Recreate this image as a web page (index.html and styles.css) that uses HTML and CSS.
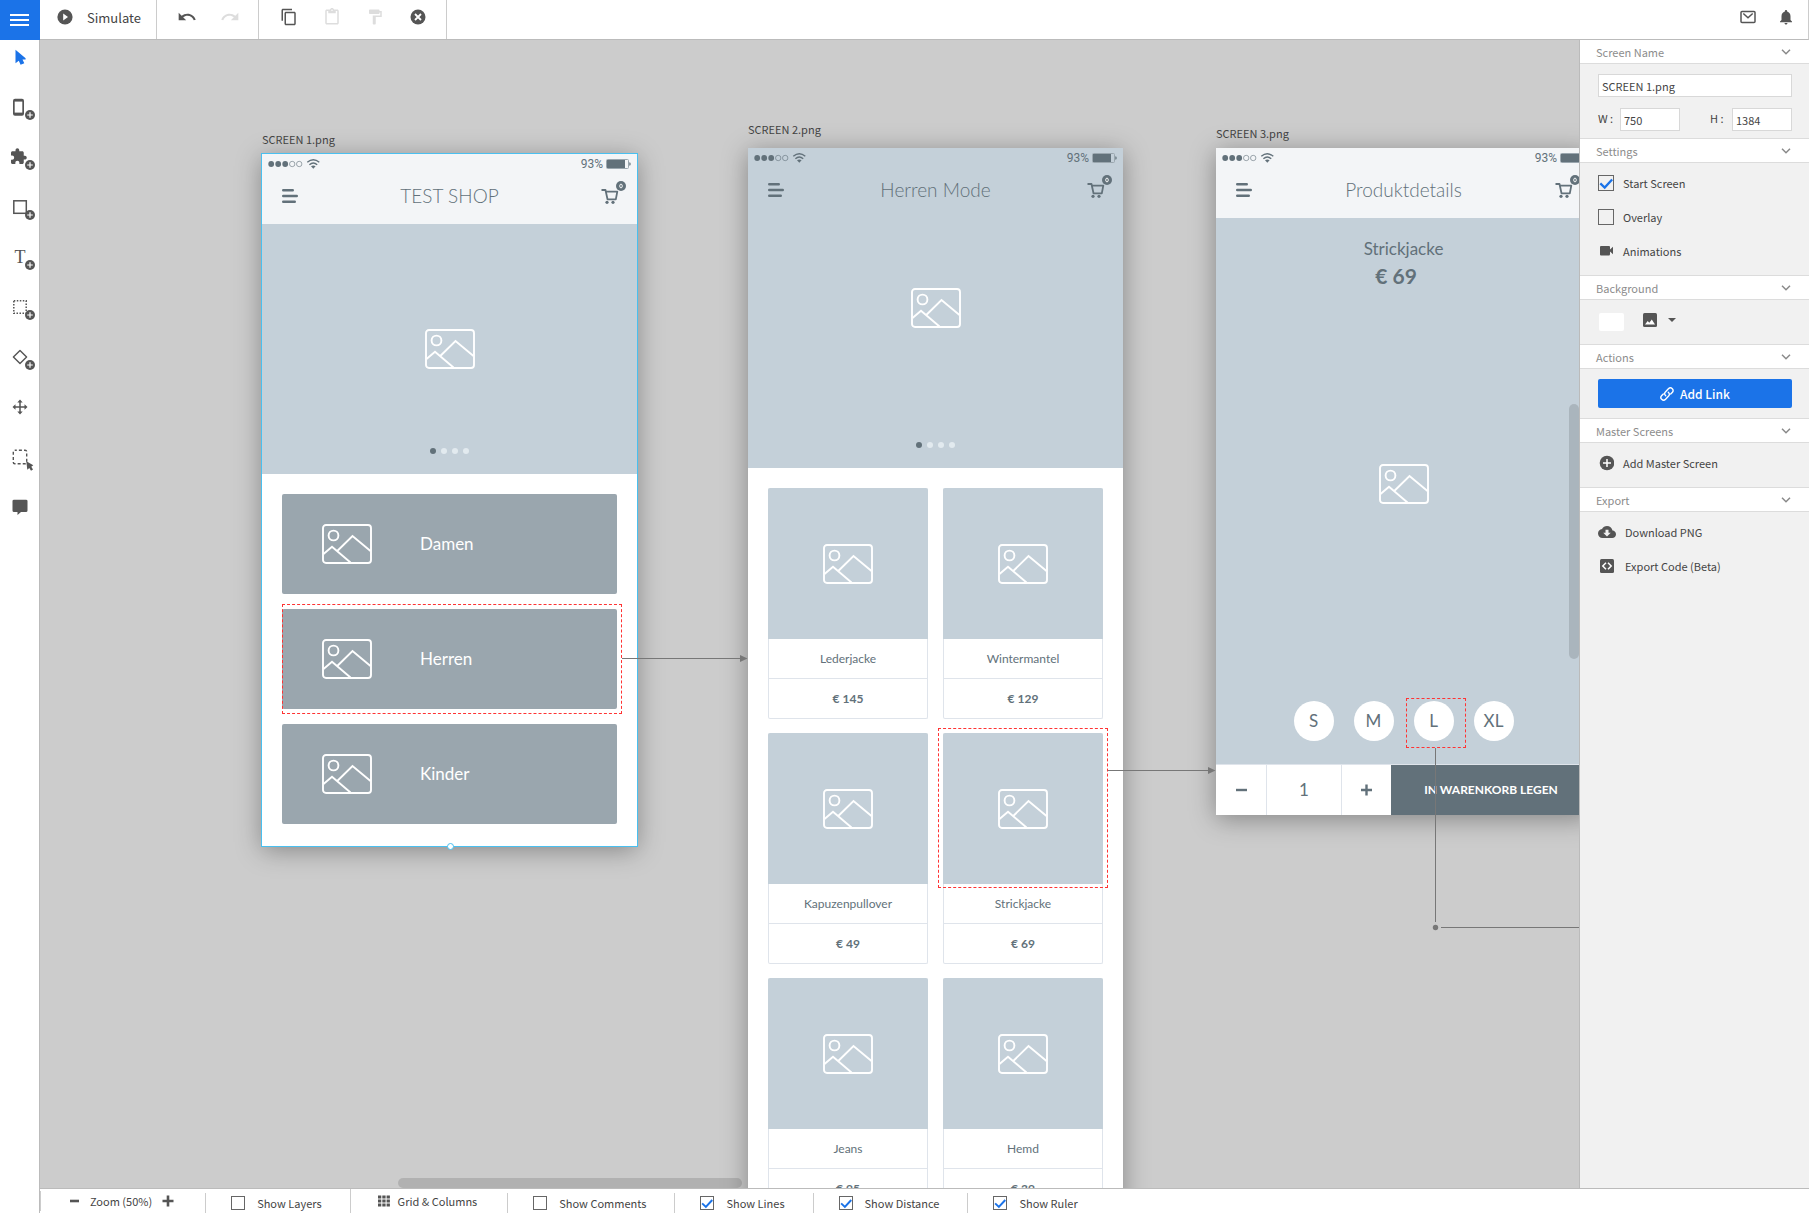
FILE: index.html
```html
<!DOCTYPE html>
<html lang="en">
  <head>
    <meta charset="UTF-8" />
    <meta name="viewport" content="width=device-width, initial-scale=1.0" />
    <title>Prototype editor</title>
    <link rel="stylesheet" href="styles.css">
  </head>
  <body>
    <!-- shared icons -->
    <svg class="sprite" aria-hidden="true">
      <symbol id="picture" viewBox="0 0 50 40">
        <g fill="none" stroke="#fff" stroke-width="1.9">
          <rect x="1" y="1" width="48" height="38" rx="3" />
          <circle cx="11.5" cy="11.5" r="4.9" />
          <path d="M1.5 30 10 22.8 28.5 38.5M15 27.2 30.5 12 48.5 27" />
        </g>
      </symbol>
      <symbol id="lines" viewBox="0 0 16 14">
        <path d="M1.2 1.3H10.8M1.2 7H14.8M1.2 12.7H12.8" stroke="#62717a" stroke-width="2.4" stroke-linecap="round" />
      </symbol>
      <symbol id="cart" viewBox="0 0 25 23">
        <path d="M.5 9H4.5L6.5 18.3H14.8L16.3 10.6H5" fill="none" stroke="#62717a" stroke-width="1.8" stroke-linejoin="round" />
        <circle cx="6" cy="21.3" r="1.6" fill="#62717a" />
        <circle cx="12" cy="21.3" r="1.6" fill="#62717a" />
        <circle cx="20" cy="5" r="5" fill="#62717a" />
        <ellipse cx="20" cy="5" rx="1.3" ry="1.9" fill="none" stroke="#fff" stroke-width=".9" />
      </symbol>
      <symbol id="signal" viewBox="0 0 54 12">
        <g fill="#62717a">
          <circle cx="3.2" cy="6" r="2.9" /><circle cx="10.2" cy="6" r="2.9" /><circle cx="17.2" cy="6" r="2.9" />
        </g>
        <g fill="none" stroke="#62717a" stroke-width=".6">
          <circle cx="24.2" cy="6" r="2.7" /><circle cx="31.2" cy="6" r="2.7" />
        </g>
        <path d="M39.3 4.3Q45.3-1 51.3 4.3M41.4 6.7Q45.3 3.2 49.2 6.7" fill="none" stroke="#62717a" stroke-width="1.4" />
        <path d="M43 8.3Q45.3 6.6 47.6 8.3L45.3 10.7Z" fill="#62717a" />
      </symbol>
      <symbol id="battery" viewBox="0 0 25 10">
        <rect x=".5" y=".5" width="22" height="9" rx="1" fill="none" stroke="#9aa6ae" />
        <rect x="1" y="1" width="18" height="8" fill="#62717a" />
        <path d="M23.3 3.2Q24.7 3.4 24.7 5T23.3 6.8Z" fill="#62717a" />
      </symbol>
      <symbol id="chevron" viewBox="0 0 10 6">
        <path d="M1 .8 5 4.8 9 .8" fill="none" stroke="#8a8a8a" stroke-width="1.5" />
      </symbol>
      <symbol id="plus-badge" viewBox="0 0 10 10">
        <circle cx="5" cy="5" r="5" fill="#555" />
        <path d="M5 2.2V7.8M2.2 5H7.8" stroke="#fff" stroke-width="1.2" />
      </symbol>
    </svg>

    <div class="app">
      <header class="topbar">
        <button type="button" class="menu-btn" aria-label="Menu">
          <svg width="20" height="12"><path d="M0 1H19M0 6H19M0 11H19" stroke="#fff" stroke-width="2" /></svg>
        </button>
        <div class="group group-simulate">
          <button type="button" class="simulate">
            <svg width="16" height="16"><circle cx="8" cy="8" r="7.6" fill="#555" /><path d="M6.2 4.4 11 8 6.2 11.6Z" fill="#fff" /></svg>
            <span>Simulate</span>
          </button>
        </div>
        <div class="group group-history">
          <button type="button" aria-label="Undo">
            <svg width="20" height="20" viewBox="0 0 24 24"><path fill="#555" d="M12.5 8c-2.65 0-5.05.99-6.9 2.6L2 7v9h9l-3.62-3.62c1.39-1.16 3.16-1.88 5.12-1.88 3.54 0 6.55 2.31 7.6 5.5l2.37-.78C21.08 11.03 17.15 8 12.5 8z" /></svg>
          </button>
          <button type="button" aria-label="Redo" disabled>
            <svg width="20" height="20" viewBox="0 0 24 24"><path fill="#ddd" d="M18.4 10.6C16.55 8.99 14.15 8 11.5 8c-4.65 0-8.58 3.03-9.96 7.22L3.9 16c1.05-3.19 4.05-5.5 7.6-5.5 1.95 0 3.73.72 5.12 1.88L13 16h9V7l-3.6 3.6z" /></svg>
          </button>
        </div>
        <div class="group group-edit">
          <button type="button" aria-label="Copy">
            <svg width="18" height="18" viewBox="0 0 24 24"><path fill="#555" d="M16 1H4c-1.1 0-2 .9-2 2v14h2V3h12V1zm3 4H8c-1.1 0-2 .9-2 2v14c0 1.1.9 2 2 2h11c1.1 0 2-.9 2-2V7c0-1.1-.9-2-2-2zm0 16H8V7h11v14z" /></svg>
          </button>
          <button type="button" aria-label="Paste" disabled>
            <svg width="18" height="18" viewBox="0 0 24 24"><path fill="#ddd" d="M19 2h-4.18C14.4.84 13.3 0 12 0c-1.3 0-2.4.84-2.82 2H5c-1.1 0-2 .9-2 2v16c0 1.1.9 2 2 2h14c1.1 0 2-.9 2-2V4c0-1.1-.9-2-2-2zm-7 0c.55 0 1 .45 1 1s-.45 1-1 1-1-.45-1-1 .45-1 1-1zm7 18H5V4h2v3h10V4h2v16z" /></svg>
          </button>
          <button type="button" aria-label="Copy style" disabled>
            <svg width="18" height="18" viewBox="0 0 24 24"><path fill="#ddd" d="M18 4V3c0-.55-.45-1-1-1H5c-.55 0-1 .45-1 1v4c0 .55.45 1 1 1h12c.55 0 1-.45 1-1V6h1v4H9v11c0 .55.45 1 1 1h2c.55 0 1-.45 1-1v-9h8V4h-3z" /></svg>
          </button>
          <button type="button" aria-label="Delete">
            <svg width="18" height="18"><circle cx="9" cy="9" r="7.5" fill="#555" /><path d="M6 6 12 12M12 6 6 12" stroke="#fff" stroke-width="1.8" /></svg>
          </button>
        </div>
        <div class="notices">
          <button type="button" aria-label="Messages">
            <svg width="18" height="18" viewBox="0 0 18 18"><g fill="none" stroke="#555" stroke-width="1.5"><rect x="2" y="3.5" width="14" height="11" rx="1" /><path d="M4.3 5.5 9 9.8 13.7 5.5" /></g></svg>
          </button>
          <button type="button" aria-label="Notifications">
            <svg width="18" height="18" viewBox="0 0 24 24"><path fill="#555" d="M12 22c1.1 0 2-.9 2-2h-4c0 1.1.89 2 2 2zm6-6v-5c0-3.07-1.64-5.64-4.5-6.32V4c0-.83-.67-1.5-1.5-1.5s-1.5.67-1.5 1.5v.68C7.63 5.36 6 7.92 6 11v5l-2 2v1h16v-1l-2-2z" /></svg>
          </button>
        </div>
      </header>

      <nav class="tools">
        <button type="button" aria-label="Select">
          <svg width="40" height="32"><path d="M15.5 8.8V22.2L18.8 19.8 20.6 23.7 24.3 22.3 22.5 18.4H25.6V17.3Z" fill="#1b73e8" /></svg>
        </button>
        <button type="button" aria-label="Add screen">
          <svg width="40" height="32"><rect x="13" y="7.8" width="11" height="17" rx="2" fill="#555" /><rect x="14.7" y="10.6" width="7.6" height="11" fill="#fff" /><use href="#plus-badge" x="25" y="19" width="10" height="10" /></svg>
        </button>
        <button type="button" aria-label="Add widget">
          <svg width="40" height="32"><path transform="translate(9.5 6.5) scale(.75)" fill="#555" d="M20.5 11H19V7c0-1.1-.9-2-2-2h-4V3.5C13 2.12 11.88 1 10.5 1S8 2.12 8 3.5V5H4c-1.1 0-1.99.9-1.99 2v3.8H3.5c1.49 0 2.7 1.21 2.7 2.7s-1.21 2.7-2.7 2.7H2V20c0 1.1.9 2 2 2h3.8v-1.5c0-1.49 1.21-2.7 2.7-2.7 1.49 0 2.7 1.21 2.7 2.7V22H17c1.1 0 2-.9 2-2v-4h1.5c1.38 0 2.5-1.12 2.5-2.5S21.88 11 20.5 11z" /><use href="#plus-badge" x="25" y="19" width="10" height="10" /></svg>
        </button>
        <button type="button" aria-label="Add box">
          <svg width="40" height="32"><rect x="13.8" y="9.8" width="12.5" height="12.5" fill="none" stroke="#555" stroke-width="1.5" /><use href="#plus-badge" x="25" y="19" width="10" height="10" /></svg>
        </button>
        <button type="button" aria-label="Add text">
          <svg width="40" height="32"><text x="20" y="22" class="tool-letter">T</text><use href="#plus-badge" x="25" y="19" width="10" height="10" /></svg>
        </button>
        <button type="button" aria-label="Add hotspot">
          <svg width="40" height="32"><rect x="13.8" y="9.8" width="12.4" height="12.4" fill="none" stroke="#555" stroke-width="1.5" stroke-dasharray="1.5 1.5" /><use href="#plus-badge" x="25" y="19" width="10" height="10" /></svg>
        </button>
        <button type="button" aria-label="Add logic">
          <svg width="40" height="32"><path d="M20 9.4 26.6 16 20 22.6 13.4 16Z" fill="none" stroke="#555" stroke-width="1.4" stroke-linejoin="round" /><use href="#plus-badge" x="25" y="19" width="10" height="10" /></svg>
        </button>
        <button type="button" aria-label="Move">
          <svg width="40" height="32"><path d="M20 10V22M14 16H26" stroke="#555" stroke-width="1.5" /><path d="M20 8.5 22.7 11.5H17.3ZM20 23.5 17.3 20.5H22.7ZM12.5 16 15.5 13.3V18.7ZM27.5 16 24.5 18.7V13.3Z" fill="#555" /></svg>
        </button>
        <button type="button" aria-label="Select area">
          <svg width="40" height="32"><rect x="13.3" y="9.3" width="13.4" height="13.4" rx="1.5" fill="none" stroke="#555" stroke-width="1.4" stroke-dasharray="3 2.1" stroke-dashoffset="1" /><path d="M26.3 20.3 33.3 24.3 31.3 25.7 33 28.5 31 29.7 29.3 27 27.3 28.7Z" fill="#555" /></svg>
        </button>
        <button type="button" aria-label="Comment">
          <svg width="40" height="32"><path d="M14 8.7H26Q27.5 8.7 27.5 10V19.5Q27.5 21 26 21H21L17.5 24V21H14Q12.5 21 12.5 19.5V10Q12.5 8.7 14 8.7Z" fill="#555" /></svg>
        </button>
      </nav>

      <main class="canvas">
        <section class="screen screen-1">
          <h2 class="screen-label">SCREEN 1.png</h2>
          <div class="board selected">
            <div class="phone-head">
              <div class="status"><svg width="54" height="12"><use href="#signal" /></svg><span>93%</span><svg width="25" height="10"><use href="#battery" /></svg></div>
              <div class="title-row"><svg width="16" height="14"><use href="#lines" /></svg><h3>TEST SHOP</h3><svg class="cart" width="25" height="23"><use href="#cart" /></svg></div>
            </div>
            <div class="hero hero-shop">
              <svg width="50" height="40"><use href="#picture" /></svg>
              <div class="dots"><i class="on"></i><i></i><i></i><i></i></div>
            </div>
            <ul class="categories">
              <li><svg width="50" height="40"><use href="#picture" /></svg>Damen</li>
              <li><svg width="50" height="40"><use href="#picture" /></svg>Herren<span class="hotspot"></span></li>
              <li><svg width="50" height="40"><use href="#picture" /></svg>Kinder</li>
            </ul>
            <span class="handle"></span>
          </div>
        </section>

        <section class="screen screen-2">
          <h2 class="screen-label">SCREEN 2.png</h2>
          <div class="board">
            <div class="phone-head tinted">
              <div class="status"><svg width="54" height="12"><use href="#signal" /></svg><span>93%</span><svg width="25" height="10"><use href="#battery" /></svg></div>
              <div class="title-row"><svg width="16" height="14"><use href="#lines" /></svg><h3>Herren Mode</h3><svg class="cart" width="25" height="23"><use href="#cart" /></svg></div>
            </div>
            <div class="hero hero-mode">
              <svg width="50" height="40"><use href="#picture" /></svg>
              <div class="dots"><i class="on"></i><i></i><i></i><i></i></div>
            </div>
            <div class="products">
              <article class="product"><div class="photo"><svg width="50" height="40"><use href="#picture" /></svg></div><p>Lederjacke</p><p class="price">€ 145</p></article>
              <article class="product"><div class="photo"><svg width="50" height="40"><use href="#picture" /></svg></div><p>Wintermantel</p><p class="price">€ 129</p></article>
              <article class="product"><div class="photo"><svg width="50" height="40"><use href="#picture" /></svg></div><p>Kapuzenpullover</p><p class="price">€ 49</p></article>
              <article class="product"><div class="photo"><svg width="50" height="40"><use href="#picture" /></svg></div><p>Strickjacke</p><p class="price">€ 69</p><span class="hotspot"></span></article>
              <article class="product"><div class="photo"><svg width="50" height="40"><use href="#picture" /></svg></div><p>Jeans</p><p class="price">€ 95</p></article>
              <article class="product"><div class="photo"><svg width="50" height="40"><use href="#picture" /></svg></div><p>Hemd</p><p class="price">€ 39</p></article>
            </div>
          </div>
        </section>

        <section class="screen screen-3">
          <h2 class="screen-label">SCREEN 3.png</h2>
          <div class="board">
            <div class="phone-head">
              <div class="status"><svg width="54" height="12"><use href="#signal" /></svg><span>93%</span><svg width="25" height="10"><use href="#battery" /></svg></div>
              <div class="title-row"><svg width="16" height="14"><use href="#lines" /></svg><h3>Produktdetails</h3><svg class="cart" width="25" height="23"><use href="#cart" /></svg></div>
            </div>
            <div class="hero hero-detail">
              <p class="detail-name">Strickjacke</p>
              <p class="detail-price">€ 69</p>
              <svg class="detail-photo" width="50" height="40"><use href="#picture" /></svg>
              <div class="sizes">
                <button type="button">S</button>
                <button type="button">M</button>
                <div class="size-linked"><button type="button">L</button><span class="hotspot"></span></div>
                <button type="button">XL</button>
              </div>
            </div>
            <div class="buy-row">
              <button type="button" aria-label="Less"><svg width="11" height="12"><path d="M0 6H11" stroke="#62717a" stroke-width="2.4" /></svg></button>
              <span class="amount">1</span>
              <button type="button" aria-label="More"><svg width="11" height="12"><path d="M0 6H11M5.5 .5V11.5" stroke="#62717a" stroke-width="2.4" /></svg></button>
              <button type="button" class="buy">IN WARENKORB LEGEN</button>
            </div>
          </div>
        </section>

        <!-- connectors between hotspots and screens -->
        <svg class="connectors" aria-hidden="true">
          <g stroke="#777" fill="none">
            <path d="M582 618.5H702M1068 730.5H1170M1395.5 708V882M1401 887.5H1600" />
          </g>
          <g fill="#777">
            <path d="M700 615V622L707.5 618.5ZM1168 727V734L1175.5 730.5Z" />
            <circle cx="1395.5" cy="887.5" r="2.7" />
          </g>
        </svg>
        <span class="scroll-x"></span>
        <span class="scroll-y"></span>
      </main>

      <aside class="panel">
        <h4>Screen Name<svg width="10" height="6"><use href="#chevron" /></svg></h4>
        <div class="panel-body body-name">
          <input type="text" aria-label="Screen name" value="SCREEN 1.png">
          <div class="size-fields">
            <label for="w">W :</label><input type="text" id="w" value="750">
            <label for="h">H :</label><input type="text" id="h" value="1384">
          </div>
        </div>
        <h4>Settings<svg width="10" height="6"><use href="#chevron" /></svg></h4>
        <div class="panel-body body-settings">
          <label class="option"><input type="checkbox" checked>Start Screen</label>
          <label class="option"><input type="checkbox">Overlay</label>
          <button type="button" class="option">
            <svg width="16" height="12"><path d="M3 1H11Q12 1 12 2V4.5L15 1.8V9.2L12 6.5V9Q12 10.5 11 10.5H3Q2 10.5 2 9.5V2Q2 1 3 1Z" fill="#555" /></svg>Animations
          </button>
        </div>
        <h4>Background<svg width="10" height="6"><use href="#chevron" /></svg></h4>
        <div class="panel-body body-background">
          <button type="button" class="swatch" aria-label="Background color"></button>
          <button type="button" class="bg-image" aria-label="Background image">
            <svg width="14" height="14"><rect width="14" height="14" rx="1.5" fill="#555" /><path d="M2 11.5 4.7 8 6.3 9.7 8.8 6.6 12 11.5Z" fill="#fff" /></svg>
            <svg width="8" height="4"><path d="M0 0H8L4 4Z" fill="#555" /></svg>
          </button>
        </div>
        <h4>Actions<svg width="10" height="6"><use href="#chevron" /></svg></h4>
        <div class="panel-body body-actions">
          <button type="button" class="add-link">
            <svg width="14" height="14" viewBox="0 0 14 14"><g fill="none" stroke="#fff" stroke-width="1.4" stroke-linecap="round"><path d="M5.7 8.7C4.3 7.5 4.3 6 5.4 4.9L8.4 1.8C9.6.6 11.2.6 12.3 1.7S13.4 4.4 12.2 5.6L10.7 7.1" /><path d="M8.3 5.3C9.7 6.5 9.7 8 8.6 9.1L5.6 12.2C4.4 13.4 2.8 13.4 1.7 12.3S.6 9.6 1.8 8.4L3.3 6.9" /></g></svg>Add Link
          </button>
        </div>
        <h4>Master Screens<svg width="10" height="6"><use href="#chevron" /></svg></h4>
        <div class="panel-body body-master">
          <button type="button" class="option">
            <svg width="16" height="16"><circle cx="9" cy="8" r="7.3" fill="#555" /><path d="M9 4V12M5 8H13" stroke="#fff" stroke-width="1.5" /></svg>Add Master Screen
          </button>
        </div>
        <h4>Export<svg width="10" height="6"><use href="#chevron" /></svg></h4>
        <div class="panel-body body-export">
          <button type="button" class="option">
            <svg width="18" height="18" viewBox="0 0 24 24"><path fill="#555" d="M19.35 10.04C18.67 6.59 15.64 4 12 4 9.11 4 6.6 5.64 5.35 8.04 2.34 8.36 0 10.91 0 14c0 3.31 2.69 6 6 6h13c2.76 0 5-2.24 5-5 0-2.64-2.05-4.78-4.65-4.96zM17 13l-5 5-5-5h3V9h4v4h3z" /></svg>Download PNG
          </button>
          <button type="button" class="option">
            <svg width="18" height="14"><rect x="2" width="14" height="14" rx="1.5" fill="#555" /><path d="M8 3.8 4.8 7 8 10.2M10 3.8 13.2 7 10 10.2" fill="none" stroke="#fff" stroke-width="1.5" /></svg>Export Code (Beta)
          </button>
        </div>
      </aside>

      <footer class="bottombar">
        <div class="item zoom">
          <button type="button" aria-label="Zoom out"><svg width="10" height="12"><path d="M0 6H9" stroke="#555" stroke-width="2.6" /></svg></button>
          <span>Zoom (50%)</span>
          <button type="button" aria-label="Zoom in"><svg width="12" height="12"><path d="M.5 6H11.5M6 .5V11.5" stroke="#555" stroke-width="2.6" /></svg></button>
        </div>
        <label class="item"><input type="checkbox">Show Layers</label>
        <button type="button" class="item grid-btn"><svg width="12" height="12"><path d="M0 2H12M0 6H12M0 10H12" stroke="#555" stroke-width="3" stroke-dasharray="3.3 1" /></svg>Grid &amp; Columns</button>
        <label class="item"><input type="checkbox">Show Comments</label>
        <label class="item"><input type="checkbox" checked>Show Lines</label>
        <label class="item"><input type="checkbox" checked>Show Distance</label>
        <label class="item"><input type="checkbox" checked>Show Ruler</label>
      </footer>
    </div>
  </body>
</html>
```

FILE: styles.css
```css
* {
    box-sizing: border-box;
}

body {
    margin: 0;
    font-family: "Noto Sans CJK SC", sans-serif;
    font-size: 11px;
    line-height: 16px;
    color: #444;
}

h2, h3, h4, p, ul {
    margin: 0;
    padding: 0;
    font-weight: 400;
}

svg {
    display: block;
    flex: none;
}

button {
    display: flex;
    align-items: center;
    padding: 0;
    border: 0;
    background: none;
    color: inherit;
    font: inherit;
    cursor: pointer;
}

.sprite {
    position: absolute;
    width: 0;
    height: 0;
}

.app {
    display: grid;
    grid-template-columns: 40px 1fr 230px;
    grid-template-rows: 40px 1fr 25px;
    height: 100vh;
    background: #fff;
}

/* Top bar */
.topbar {
    grid-column: 1 / -1;
    display: flex;
    border-bottom: 1px solid #bbb;
    border-right: 1px solid #ccc;
}

.menu-btn {
    justify-content: center;
    width: 40px;
    height: 40px;
    background: #1b73e8;
}

.group {
    display: flex;
    align-items: center;
    padding-bottom: 5px;
    border-right: 1px solid #ccc;
}

.group-simulate {
    padding-left: 17px;
    padding-right: 15px;
}

.simulate {
    gap: 14px;
    font-size: 13px;
}

.simulate span {
    padding-top: 2px;
}

.group-history {
    gap: 23px;
    padding-left: 20px;
    padding-right: 18px;
}

.group-edit {
    gap: 25px;
    padding-left: 21px;
    padding-right: 19px;
}

.notices {
    display: flex;
    gap: 20px;
    margin-left: auto;
    padding-right: 13px;
    padding-bottom: 5px;
}

/* Left tools */
.tools {
    grid-row: 2 / 4;
    padding-top: 1px;
    border-right: 1px solid #bbb;
}

.tools button {
    align-items: flex-start;
    width: 39px;
    height: 50px;
}

.tool-letter {
    font-family: "Liberation Serif", serif;
    font-size: 18px;
    text-anchor: middle;
    fill: #555;
}

/* Canvas */
.canvas {
    position: relative;
    overflow: hidden;
    background: #ccc;
}

.screen {
    position: absolute;
    width: 375px;
}

.screen-1 {
    left: 222px;
    top: 91px;
}

.screen-2 {
    left: 708px;
    top: 81px;
}

.screen-3 {
    left: 1176px;
    top: 85px;
}

.screen-label {
    padding-bottom: 7px;
    font-size: 11px;
    line-height: 16px;
}

.screen-2 .screen-label {
    padding-bottom: 11px;
}

.board {
    position: relative;
    background: #fff;
    box-shadow: 0 4px 24px rgba(0, 0, 0, 0.35);
    color: #62717a;
    font-family: Lato, sans-serif;
}

.board.selected {
    outline: 1px solid #49c0f0;
}

.phone-head {
    height: 70px;
    background: #f3f5f7;
}

.phone-head.tinted {
    background: #c4d0d9;
}

.status {
    display: flex;
    align-items: center;
    height: 20px;
    padding: 0 6px;
    font-family: Roboto, sans-serif;
    font-size: 12px;
    font-weight: 400;
}

.status span {
    margin-left: auto;
    margin-right: 3px;
}

.title-row {
    display: flex;
    align-items: center;
    justify-content: space-between;
    height: 44px;
    padding: 0 11px 0 20px;
}

.title-row h3 {
    font-size: 19px;
    font-weight: 300;
    line-height: 24px;
}

.title-row .cart {
    margin-bottom: 7px;
}

.hero {
    position: relative;
    display: flex;
    align-items: center;
    justify-content: center;
    background: #c4d0d9;
}

.hero-shop,
.hero-mode {
    height: 250px;
}

.hero-mode {
    padding-bottom: 70px;
}

.dots {
    position: absolute;
    bottom: 20px;
    left: 0;
    right: 0;
    display: flex;
    justify-content: center;
    gap: 5px;
}

.dots i {
    width: 6px;
    height: 6px;
    border-radius: 50%;
    background: #e2eaef;
}

.dots i.on {
    background: #62717a;
}

.hotspot {
    position: absolute;
    border: 1px dashed #f33;
}

.categories {
    display: grid;
    gap: 15px;
    padding: 20px 20px 22px;
    list-style: none;
}

.categories li {
    position: relative;
    display: flex;
    align-items: center;
    gap: 48px;
    height: 100px;
    padding-left: 40px;
    border-radius: 2px;
    background: #9aa6ae;
    color: #fff;
    font-size: 17px;
    line-height: 18px;
}

.categories .hotspot {
    inset: -5px -5px -5px 0;
}

.handle {
    position: absolute;
    bottom: -4px;
    left: 185px;
    width: 7px;
    height: 7px;
    border: 1px solid #49c0f0;
    border-radius: 50%;
    background: #fff;
}

.products {
    display: grid;
    grid-template-columns: 1fr 1fr;
    gap: 14px 15px;
    padding: 20px;
}

.product {
    position: relative;
    border: 1px solid #dfe4eb;
    border-top: 0;
    border-radius: 2px;
    text-align: center;
}

.product p {
    font-size: 12px;
    line-height: 39px;
}

.product .price {
    border-top: 1px solid #dfe4eb;
    font-weight: 700;
}

.photo {
    display: flex;
    align-items: center;
    justify-content: center;
    height: 151px;
    margin: 0 -1px;
    border-radius: 2px 2px 0 0;
    background: #c4d0d9;
}

.product .hotspot {
    top: -5px;
    left: -6px;
    right: -6px;
    height: 160px;
}

.hero-detail {
    flex-direction: column;
    padding: 21px 0 23px;
}

.detail-name {
    font-size: 17px;
    line-height: 20px;
}

.detail-price {
    padding-top: 3px;
    padding-right: 15px;
    font-size: 21px;
    font-weight: 700;
    line-height: 28px;
}

.detail-photo {
    margin: 174px 0 197px;
}

.sizes {
    display: flex;
    gap: 20px;
}

.size-linked {
    position: relative;
}

.sizes button {
    justify-content: center;
    width: 40px;
    height: 40px;
    border-radius: 50%;
    background: #fff;
    font-size: 17px;
}

.sizes .hotspot {
    inset: -3px -12px -7px -8px;
}

.buy-row {
    display: grid;
    grid-template-columns: 50px 76px 49px 1fr;
    height: 51px;
    border-top: 1px solid #dfe4eb;
}

.buy-row button {
    justify-content: center;
}

.amount {
    border: 1px solid #dfe4eb;
    border-width: 0 1px;
    font-size: 17px;
    line-height: 50px;
    text-align: center;
}

.buy-row .buy {
    background: #62717a;
    color: #fff;
    font-size: 12px;
    font-weight: 700;
}

.connectors {
    position: absolute;
    top: 0;
    left: 0;
    width: 100%;
    height: 100%;
}

.scroll-x,
.scroll-y {
    position: absolute;
    border-radius: 5px;
    background: rgba(0, 0, 0, 0.13);
}

.scroll-x {
    bottom: 0;
    left: 358px;
    width: 344px;
    height: 10px;
}

.scroll-y {
    top: 364px;
    right: 0;
    width: 10px;
    height: 255px;
}

/* Right panel */
.panel {
    border-left: 1px solid #bbb;
    background: #f1f1f1;
}

.panel h4 {
    display: flex;
    align-items: center;
    justify-content: space-between;
    height: 25px;
    padding: 0 18px 0 16px;
    border: 1px solid #dcdcdc;
    border-width: 1px 0;
    background: #fff;
    color: #8c8c8c;
    font-size: 11px;
}

.panel h4:first-child {
    height: 24px;
    border-top: 0;
}

.panel-body {
    padding: 10px 17px 0 18px;
}

.panel input[type="text"] {
    width: 100%;
    height: 23px;
    padding: 0 3px;
    border: 1px solid #d8d8d8;
    background: #fff;
    color: #444;
    font: inherit;
}

.body-name {
    height: 74px;
}

.size-fields {
    display: grid;
    grid-template-columns: 22px 60px 52px 60px;
    padding-top: 11px;
    line-height: 20px;
}

.size-fields label[for="h"] {
    padding-left: 30px;
}

.body-settings {
    display: grid;
    align-content: start;
    gap: 18px;
    height: 112px;
    padding-top: 12px;
}

.option {
    display: flex;
    align-items: center;
    gap: 9px;
    height: 16px;
}

input[type="checkbox"] {
    appearance: none;
    flex: none;
    width: 16px;
    height: 16px;
    margin: 0;
    border: 1px solid #666;
    background: #fff;
}

.panel input[type="checkbox"] {
    background-color: #f1f1f1;
}

input[type="checkbox"]:checked {
    background-image: url("data:image/svg+xml,%3Csvg xmlns='http://www.w3.org/2000/svg' viewBox='0 0 16 16'%3E%3Cpath d='M1.5 8.5 6.5 13.2 15 4' fill='none' stroke='%231b73e8' stroke-width='2.6'/%3E%3C/svg%3E");
}

.body-background {
    display: flex;
    align-items: flex-start;
    gap: 19px;
    height: 44px;
    padding-top: 13px;
    padding-left: 19px;
}

.swatch {
    width: 25px;
    height: 18px;
    border-radius: 2px;
    background: #fff;
}

.bg-image {
    gap: 11px;
}

.body-actions {
    height: 49px;
}

.add-link {
    justify-content: center;
    gap: 6px;
    width: 100%;
    height: 29px;
    border-radius: 2px;
    background: #1b73e8;
    color: #fff;
    font-size: 12px;
    font-weight: 500;
}

.body-master {
    height: 44px;
    padding-top: 12px;
}

.body-export {
    display: grid;
    gap: 18px;
    padding-top: 12px;
}

/* Bottom bar */
.bottombar {
    grid-column: 2 / -1;
    display: flex;
    border-top: 1px solid #bbb;
}

.item {
    display: flex;
    align-items: center;
    gap: 12px;
    height: 20px;
    margin-top: 4px;
    padding: 0 28px 0 25px;
    border-left: 1px solid #ccc;
}

.item input[type="checkbox"] {
    width: 14px;
    height: 14px;
}

.zoom {
    gap: 10px;
    margin-top: 2px;
    padding: 0 31px 0 29px;
}

.item.grid-btn {
    gap: 8px;
    height: 24px;
    margin-top: 0;
    padding-left: 27px;
    padding-right: 30px;
    border-left: 1px solid #ccc;
}
```
